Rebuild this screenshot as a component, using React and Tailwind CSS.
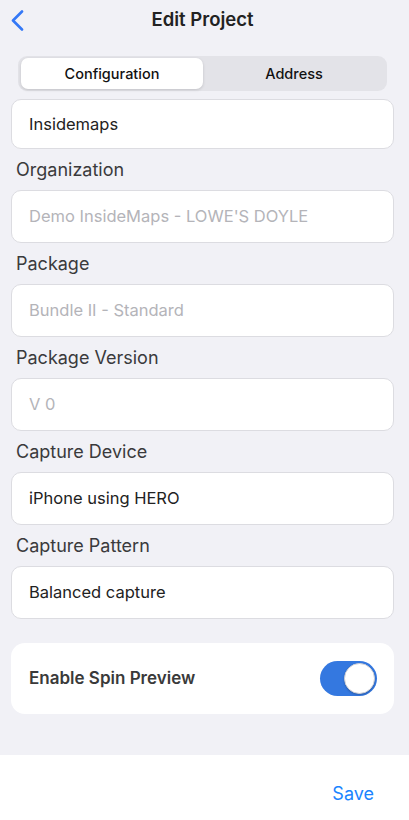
import React from 'react';

const fields = [
  { label: 'Organization', value: "Demo InsideMaps - LOWE'S DOYLE", muted: true },
  { label: 'Package', value: 'Bundle II - Standard', muted: true },
  { label: 'Package Version', value: 'V 0', muted: true },
  { label: 'Capture Device', value: 'iPhone using HERO' },
  { label: 'Capture Pattern', value: 'Balanced capture' },
];

const Field = ({ value, muted, className = 'h-[53px]' }) => (
  <div
    className={`flex items-center rounded-[10px] border border-[#dcdce1] bg-white px-[17px] text-[16.5px] ${
      muted ? 'text-[#b4b4b9]' : 'text-[#222222]'
    } ${className}`}
  >
    {value}
  </div>
);

export default function App() {
  return (
    <div
      className="flex h-[820px] w-full flex-col bg-[#f1f1f6]"
      style={{ fontFamily: 'Inter, "Noto Sans", sans-serif' }}
    >
      {/* Header */}
      <div className="grid h-[40px] grid-cols-[1fr_auto_1fr] items-center pl-[11px] pr-[15px]">
        <button className="flex h-[24px] w-[24px] items-center">
          <svg width="13" height="21" viewBox="0 0 13 21" fill="none">
            <path d="M11 1.5 L2 10.5 L11 19.5" stroke="#3478f6" strokeWidth="2.6" strokeLinecap="round" strokeLinejoin="round" />
          </svg>
        </button>
        <h1 className="text-[18.5px] font-semibold text-[#222222]">Edit Project</h1>
        <div />
      </div>

      {/* Segmented control */}
      <div className="ml-[18px] mr-[22px] mt-[16px] flex h-[35px] rounded-[9px] bg-[#e3e3e8] p-[2px] pl-[3px]">
        <div className="flex flex-1 items-center justify-center rounded-[7px] bg-white text-[14.5px] font-medium text-[#111111] shadow-[0_1px_3px_rgba(0,0,0,0.15)]">
          Configuration
        </div>
        <div className="flex flex-1 items-center justify-center text-[14.5px] font-medium text-[#111111]">
          Address
        </div>
      </div>

      {/* Form */}
      <div className="flex-1 pl-[11px] pr-[15px] pt-[8px]">
        <Field value="Insidemaps" className="h-[50px]" />
        {fields.map((f) => (
          <div key={f.label}>
            <div className="pb-[9px] pl-[5px] pt-[10px] text-[18px] leading-[22px] text-[#3a3a3c]">{f.label}</div>
            <Field value={f.value} muted={f.muted} />
          </div>
        ))}

        <div className="mt-[24px] flex h-[71px] items-center justify-between rounded-[14px] bg-white pl-[18px] pr-[17px]">
          <span className="text-[17px] font-semibold text-[#3a3a3a]">Enable Spin Preview</span>
          <div className="flex h-[35px] w-[57px] items-center justify-end rounded-full bg-[#3478e0] pr-[2px]">
            <div className="h-[31px] w-[31px] rounded-full border border-[#d0d0d5] bg-white shadow-[0_1px_2px_rgba(0,0,0,0.2)]" />
          </div>
        </div>
      </div>

      {/* Footer */}
      <div className="flex h-[65px] items-center justify-end bg-white pr-[35px] pt-[12px]">
        <span className="text-[18px] text-[#1a84ff]">Save</span>
      </div>
    </div>
  );
}
